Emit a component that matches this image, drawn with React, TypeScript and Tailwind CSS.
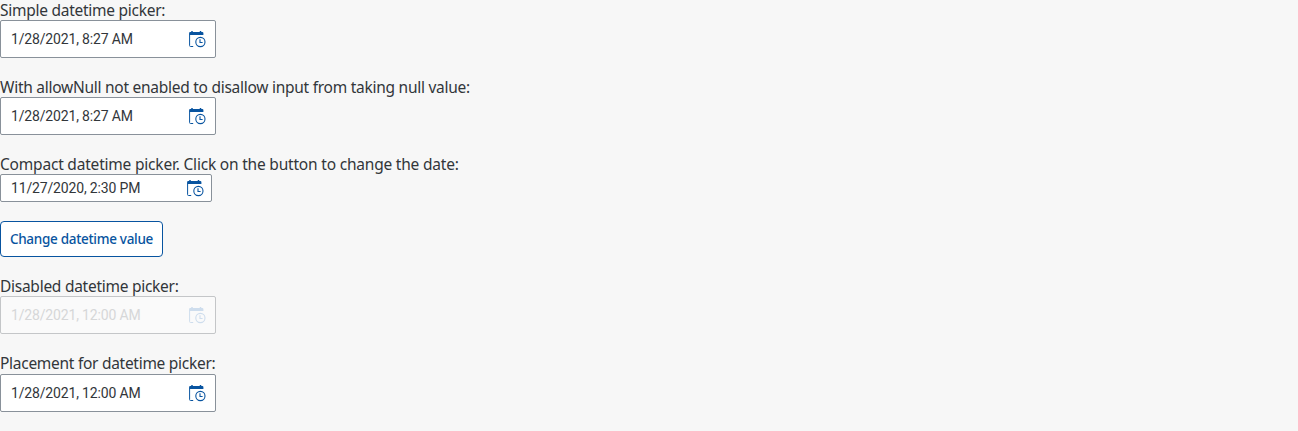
type PickerProps = {
  label: string;
  value: string;
  className?: string;
  labelClass?: string;
  compact?: boolean;
  disabled?: boolean;
};

function DateTimeIcon() {
  return (
    <svg width="18" height="18" viewBox="0 0 18 18" fill="none" stroke="currentColor" aria-hidden="true">
      <path d="M1.1 2.9Q1.1 2 2.1 2H14.4Q15.4 2 15.4 2.9V5H1.1Z" fill="currentColor" stroke="none" />
      <path d="M4 1.1V2.6M12.5 1.1V2.6" strokeWidth="1.5" />
      <path d="M1.6 4.5V15.6Q1.6 16.5 2.5 16.5H5.2" strokeWidth="1" />
      <circle cx="12.4" cy="12" r="4.6" strokeWidth="1.1" />
      <path d="M12 9.3V12.5H14.6" strokeWidth="1.1" />
    </svg>
  );
}

function DateTimePicker({
  label,
  value,
  className = "",
  labelClass = "h-5 tracking-[-0.265px]",
  compact = false,
  disabled = false,
}: PickerProps) {
  return (
    <div className={className}>
      <div className={`whitespace-nowrap text-[15.5px] leading-5 ${labelClass}`}>{label}</div>
      <div
        className={`flex items-center justify-between rounded-[2px] border pl-2.5 ${
          compact ? "h-7 w-[212px] pr-[7px]" : "h-[38px] w-[216px] pr-[9px]"
        } ${disabled ? "border-[#c4c6c8] bg-[#fafafa]" : "border-[#89919a] bg-white"}`}
      >
        <span
          className={`whitespace-nowrap font-['Roboto',sans-serif] text-[14px] leading-5 tracking-[-0.16px] ${
            disabled ? "text-[#d6d7d8]" : ""
          }`}
        >
          {value}
        </span>
        <span className={`${disabled ? "text-[#cedded]" : "text-[#0854a0]"}`}>
          <DateTimeIcon />
        </span>
      </div>
    </div>
  );
}

export default function App() {
  return (
    <main className="flex h-screen flex-col items-start overflow-hidden bg-[#f7f7f7] font-['Noto_Sans',sans-serif] text-[#32363a]">
      <DateTimePicker label="Simple datetime picker:" value="1/28/2021, 8:27 AM" />
      <DateTimePicker
        className="mt-[19px]"
        label="With allowNull not enabled to disallow input from taking null value:"
        value="1/28/2021, 8:27 AM"
      />
      <DateTimePicker
        className="mt-[19px]"
        labelClass="h-5 tracking-[-0.2px]"
        label="Compact datetime picker. Click on the button to change the date:"
        value="11/27/2020, 2:30 PM"
        compact
      />
      <button
        type="button"
        className="mt-[19px] flex h-9 w-[163px] items-center justify-center whitespace-nowrap rounded-[4px] border border-[#0854a0] bg-white text-[13.5px] font-medium leading-5 tracking-[-0.3px] text-[#0854a0]"
      >
        Change datetime value
      </button>
      <DateTimePicker
        className="mt-[19px]"
        label="Disabled datetime picker:"
        value="1/28/2021, 12:00 AM"
        disabled
      />
      <DateTimePicker
        className="mt-[19px]"
        labelClass="h-[21px] tracking-[-0.28px]"
        label="Placement for datetime picker:"
        value="1/28/2021, 12:00 AM"
      />
    </main>
  );
}
